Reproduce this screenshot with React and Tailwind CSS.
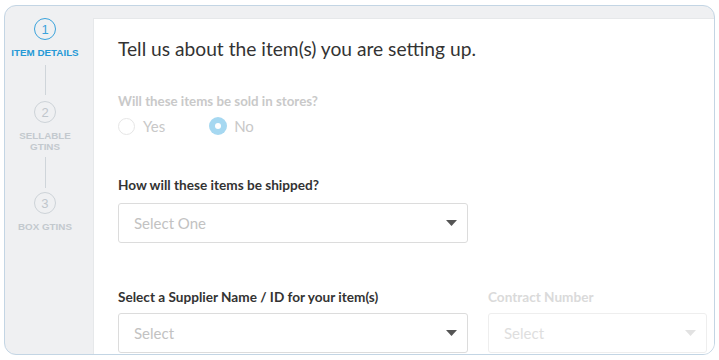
import React from 'react';

const Step = ({ num, label, active }) => (
    <div className="flex flex-col items-center">
        <div
            className={`w-[22px] h-[22px] rounded-full border flex items-center justify-center text-[13px] leading-none ${
                active ? 'border-[#3ba3dc] text-[#3ba3dc]' : 'border-[#cdd3d8] text-[#bfc6cc]'
            }`}
        >
            {num}
        </div>
        <div
            className={`mt-[7px] text-center font-bold text-[9.8px] leading-[11px] ${
                active ? 'text-[#2599d6]' : 'text-[#c3c9ce]'
            }`}
        >
            {label}
        </div>
    </div>
);

const Caret = ({ color }) => (
    <svg width="11" height="6" viewBox="0 0 11 6" className="shrink-0">
        <path d="M0 0 H11 L5.5 6 Z" fill={color} />
    </svg>
);

const SelectBox = ({ placeholder, disabled }) => (
    <div
        className={`h-[40px] rounded-[3px] border flex items-center justify-between pl-[15px] pr-[10px] bg-white ${
            disabled ? 'border-[#eeeeee]' : 'border-[#dcdcdc]'
        }`}
    >
        <span className={`text-[15px] ${disabled ? 'text-[#dedede]' : 'text-[#c2c2c2]'}`}>{placeholder}</span>
        <Caret color={disabled ? '#e2e2e2' : '#555555'} />
    </div>
);

export default function App() {
    return (
        <div className="w-[719px] h-[360px] bg-white pl-[4px] pt-[5px] font-['Liberation_Sans',sans-serif]">
            <div className="w-[711px] h-[350px] rounded-[12px] border-[1.5px] border-[#c3d5e4] bg-[#eff0f2] overflow-hidden flex">
                {/* Steps */}
                <aside className="w-[80px] shrink-0 flex flex-col items-center pt-[12px]">
                    <Step num="1" label="ITEM DETAILS" active />
                    <div className="w-px h-[30px] bg-[#cfd5da] mt-[7px]" />
                    <div className="mt-[6px]">
                        <Step num="2" label={<>SELLABLE<br />GTINS</>} />
                    </div>
                    <div className="w-px h-[31px] bg-[#cfd5da] mt-[5px]" />
                    <div className="mt-[4px]">
                        <Step num="3" label="BOX GTINS" />
                    </div>
                </aside>

                {/* Main */}
                <main className="flex-1 ml-[8px] mt-[12px] bg-white border-l border-t border-[#e6e8ea] pl-[24px] pt-[18px] font-['Lato',sans-serif]">
                    <h1 className="text-[19.2px] leading-[24px] text-[#333333]">
                        Tell us about the item(s) you are setting up.
                    </h1>

                    <p className="mt-[32px] text-[13.3px] leading-[16px] font-bold text-[#c9c9c9]">
                        Will these items be sold in stores?
                    </p>
                    <div className="mt-[7px] h-[20px] flex items-center text-[15px] text-[#c8c8c8]">
                        <span className="w-[17px] h-[17px] rounded-full border border-[#e6e6e6]" />
                        <span className="ml-[8px]">Yes</span>
                        <span className="ml-[44px] w-[18px] h-[18px] rounded-full bg-[#a6d8f1] flex items-center justify-center">
                            <span className="w-[6px] h-[6px] rounded-full bg-white" />
                        </span>
                        <span className="ml-[7px]">No</span>
                    </div>

                    <p className="mt-[41px] text-[13.6px] leading-[16px] font-bold text-[#333333]">
                        How will these items be shipped?
                    </p>
                    <div className="mt-[10px] w-[350px]">
                        <SelectBox placeholder="Select One" />
                    </div>

                    <div className="mt-[46px] flex gap-[20px]">
                        <div className="w-[350px]">
                            <p className="text-[13.6px] leading-[16px] font-bold text-[#333333]">
                                Select a Supplier Name / ID for your item(s)
                            </p>
                            <div className="mt-[8px]">
                                <SelectBox placeholder="Select" />
                            </div>
                        </div>
                        <div className="w-[219px]">
                            <p className="text-[13.6px] leading-[16px] font-bold text-[#dadada]">Contract Number</p>
                            <div className="mt-[8px]">
                                <SelectBox placeholder="Select" disabled />
                            </div>
                        </div>
                    </div>
                </main>
            </div>
        </div>
    );
}
